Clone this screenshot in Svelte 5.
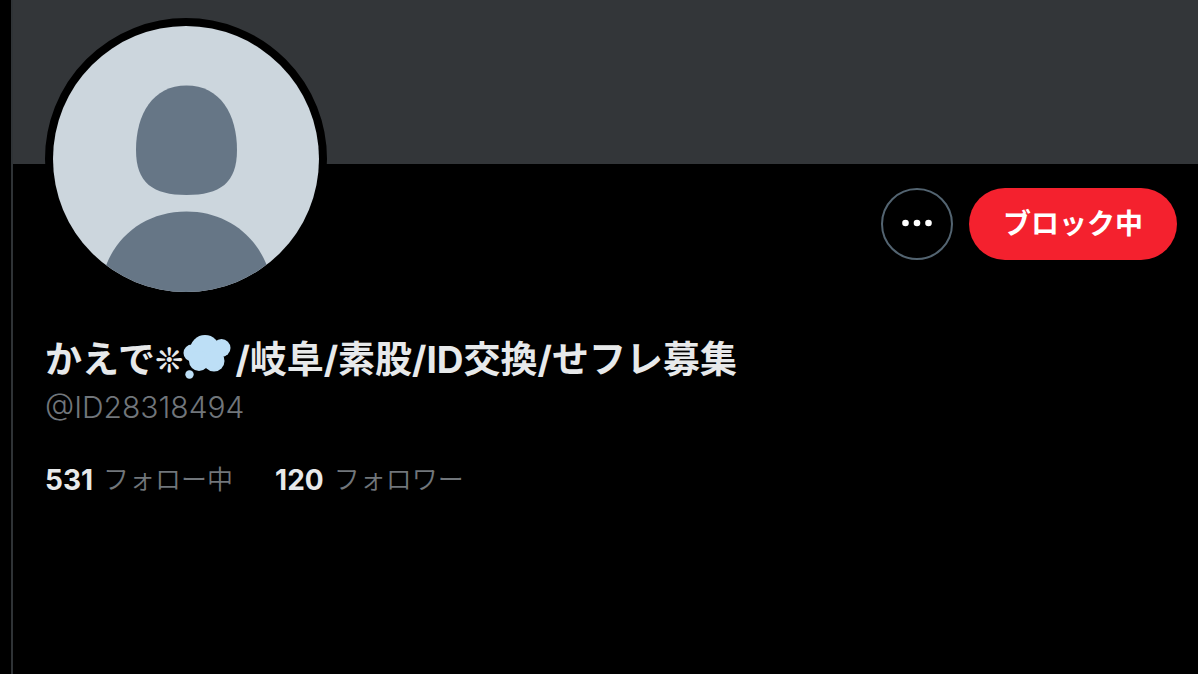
<script>
	let user = {
		name: 'かえで',
		symbol: '❊',
		bio: '/岐阜/素股/ID交換/せフレ募集',
		handle: 'ID28318494',
	};

	let stats = [
		{ count: 531, label: 'フォロー中' },
		{ count: 120, label: 'フォロワー' },
	];
</script>

<main class="profile">
	<div class="banner"></div>

	<div class="top">
		<a class="avatar" href="#photo" aria-label="プロフィール画像">
			<svg viewBox="0 0 266 266" aria-hidden="true">
				<rect width="266" height="266" fill="#ccd6dd" />
				<path
					d="M133.500 59.500C167 59.500 184 88 184 124C184 157 167 169 133.500 169C100 169 83 157 83 124C83 88 100 59.500 133.500 59.500Z"
					fill="#667686"
				/>
				<path d="M47 266C51 219 86 185.500 133.500 185.500C180 185.500 216 219 220 266Z" fill="#667686" />
			</svg>
		</a>
		<div class="actions">
			<button class="more" aria-label="もっと見る">
				<svg viewBox="0 0 32 10" aria-hidden="true">
					<circle cx="4.500" cy="4" r="3.300" />
					<circle cx="16" cy="4" r="3.300" />
					<circle cx="27.500" cy="4" r="3.300" />
				</svg>
			</button>
			<button class="block">ブロック中</button>
		</div>
	</div>

	<h1>
		<span>{user.name}</span><span class="symbol">{user.symbol}</span><svg
			class="emoji"
			viewBox="0 0 48 48"
			role="img"
			aria-label="💭"
		>
			<g fill="#bddff6">
				<circle cx="22" cy="14" r="15" />
				<circle cx="9" cy="17" r="8.500" />
				<circle cx="38.500" cy="12" r="9" />
				<circle cx="16" cy="25" r="10" />
				<circle cx="31" cy="25" r="10.500" />
				<circle cx="6.500" cy="38.500" r="4.200" />
			</g>
		</svg><span>{user.bio}</span>
	</h1>
	<p class="handle">@{user.handle}</p>

	<div class="stats">
		{#each stats as stat}
			<a href="#follow"><strong>{stat.count}</strong><span>{stat.label}</span></a>
		{/each}
	</div>
</main>

<style>
	:global(body) {
		margin: 0;
		background: #000;
	}
	.profile {
		box-sizing: border-box;
		min-height: 100vh;
		margin-left: 11px;
		border-left: 2px solid #2f3336;
		background: #000;
		color: #e7e9ea;
		font-family: Inter, 'Noto Sans CJK JP', sans-serif;
	}
	.banner {
		height: 164px;
		background: #333639;
	}
	.top {
		display: flex;
		justify-content: space-between;
		align-items: flex-start;
		padding: 24px 21px 0 32px;
	}
	.avatar {
		display: block;
		width: 266px;
		height: 266px;
		margin-top: -170px;
		border: 8px solid #000;
		border-radius: 50%;
		background: #000;
	}
	.avatar svg {
		display: block;
		border-radius: 50%;
	}
	.actions {
		display: flex;
		gap: 16px;
	}
	button {
		box-sizing: border-box;
		height: 72px;
		padding: 0;
		border-radius: 36px;
		font-family: inherit;
		cursor: pointer;
	}
	.more {
		display: grid;
		place-items: center;
		width: 72px;
		border: 2px solid #536471;
		background: transparent;
	}
	.more svg {
		width: 32px;
		height: 10px;
		fill: #fff;
	}
	.block {
		padding: 0 34px 4px;
		border: 0;
		background: #f4212e;
		color: #fff;
		font-size: 28px;
		font-weight: 700;
	}
	h1 {
		display: flex;
		align-items: center;
		margin: 36px 32px 0;
		font-size: 37px;
		line-height: 48px;
		font-weight: 700;
	}
	.symbol {
		font-family: 'DejaVu Sans', sans-serif;
		font-size: 34px;
	}
	.emoji {
		overflow: visible;
		width: 48px;
		height: 48px;
		margin-right: 4px;
	}
	.handle {
		margin: 5px 32px 0;
		color: #71767b;
		font-size: 30px;
		font-weight: 300;
		line-height: 36px;
	}
	.stats {
		display: flex;
		gap: 42px;
		margin: 37px 32px 0;
		font-size: 26px;
		line-height: 36px;
	}
	.stats a {
		display: flex;
		align-items: center;
		gap: 10px;
		color: #71767b;
		text-decoration: none;
	}
	.stats strong {
		color: #e7e9ea;
		font-size: 28px;
	}
	.stats span {
		font-weight: 350;
	}
</style>
